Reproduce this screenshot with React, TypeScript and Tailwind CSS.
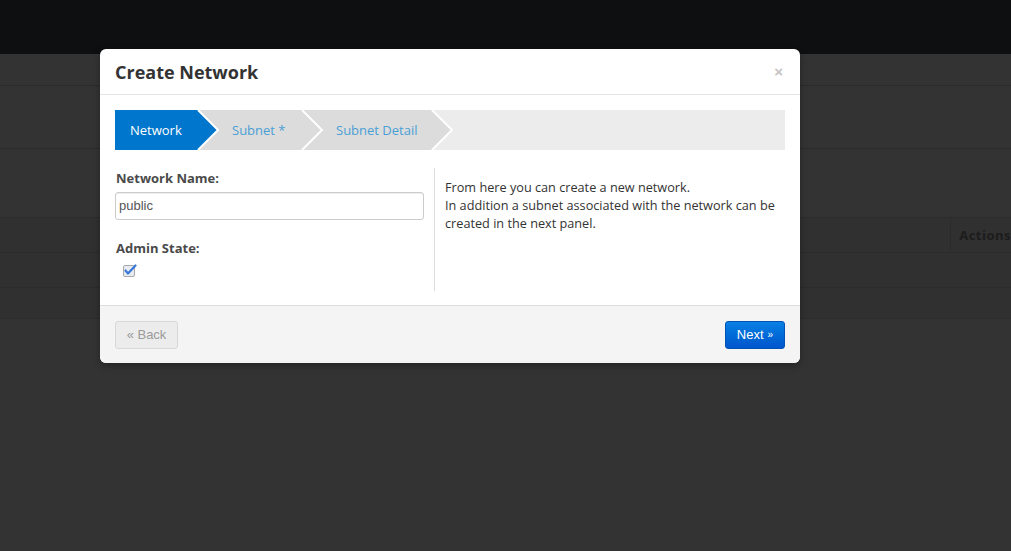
// Create Network dialog over a dimmed dashboard page

const steps = [
  { label: 'Network', width: 83, active: true },
  { label: 'Subnet *', width: 104, active: false },
  { label: 'Subnet Detail', width: 130, active: false },
]

function WizardStep({ label, width, active, z }: { label: string; width: number; active: boolean; z: number }) {
  return (
    <div className="relative h-10 shrink-0" style={{ width, zIndex: z }}>
      <svg
        className="absolute left-0 top-0"
        width={width + 22}
        height={40}
        viewBox={`0 0 ${width + 22} 40`}
      >
        <polygon
          points={`0,0 ${width},0 ${width + 20},20 ${width},40 0,40`}
          fill={active ? '#0077cc' : '#dcdcdc'}
        />
        <polyline
          points={`${width},0 ${width + 20},20 ${width},40`}
          fill="none"
          stroke="#ffffff"
          strokeWidth={2}
        />
      </svg>
      <span
        className={`relative flex h-10 items-center pt-[2px] text-[13px] ${
          active ? 'pl-[15px] text-white' : 'pl-[34px] text-[#4a9fd6]'
        }`}
      >
        {label}
      </span>
    </div>
  )
}

export default function App() {
  return (
    <div className="relative h-[551px] w-[1011px] overflow-hidden bg-[#333333] font-['Open_Sans',sans-serif]">
      {/* Page behind the overlay */}
      <div className="h-[54px] bg-[#0e0f11]" />
      <div className="h-[32px] border-b border-[#2b2b2b]" />
      <div className="h-[63px] border-b border-[#2b2b2b]" />
      <div className="h-[69px] border-b border-[#2b2b2b]" />
      <div className="flex h-[35px] border-b border-[#2b2b2b] bg-[#303030]">
        <div className="flex-1" />
        <div className="flex items-center border-l border-[#2b2b2b] pl-2 pt-[2px] text-[13px] font-bold tracking-[0.5px] text-[#1c1c1c]">
          Actions
        </div>
      </div>
      <div className="h-[35px] border-b border-[#2b2b2b] bg-[#303030]" />
      <div className="h-[31px] border-b border-[#2b2b2b] bg-[#303030]" />

      {/* Modal */}
      <div className="absolute left-[100px] top-[49px] flex h-[314px] w-[700px] flex-col rounded-[6px] bg-white shadow-[0_3px_7px_rgba(0,0,0,0.3)]">
        {/* Header */}
        <div className="flex h-[46px] shrink-0 items-center justify-between border-b border-[#e5e5e5] px-[15px] pt-[2px]">
          <h3 className="text-[18px] font-bold text-[#333333]">Create Network</h3>
          <span className="mr-[2px] font-['Liberation_Sans',sans-serif] text-[15px] font-bold text-[#c4c4c4]">×</span>
        </div>

        {/* Body */}
        <div className="flex flex-1 flex-col px-[15px] pt-[15px]">
          <div className="flex h-10 bg-[#ececec]">
            {steps.map((s, i) => (
              <WizardStep key={s.label} label={s.label} width={s.width} active={s.active} z={10 - i} />
            ))}
          </div>

          <div className="mt-[18px] flex">
            {/* Form */}
            <div className="w-[320px] shrink-0 border-r border-[#dddddd] pb-[14px]">
              <label className="block pl-[1px] pt-[1px] text-[13px] font-bold leading-[18px] text-[#4a4a4a]">
                Network Name:
              </label>
              <div className="mt-[5px] flex h-[28px] w-[309px] items-center rounded-[3px] border border-[#cccccc] pl-[3px] font-['Liberation_Sans',sans-serif] text-[13px] text-[#555555] shadow-[inset_0_1px_1px_rgba(0,0,0,0.075)]">
                public
              </div>
              <label className="mt-[19px] block pl-[1px] text-[13px] font-bold leading-[18px] text-[#4a4a4a]">
                Admin State:
              </label>
              <div className="ml-[8px] mt-[7px] h-[13px] w-[13px]">
                <svg width="14" height="13" viewBox="0 0 14 13">
                  <rect x="0.5" y="1.5" width="11" height="11" rx="1.5" fill="#e8ecf0" stroke="#a8a8a8" />
                  <path d="M2.5 6.5 L5 9.5 L12.5 1.5" fill="none" stroke="#3a78d8" strokeWidth="2.2" strokeLinecap="round" strokeLinejoin="round" />
                </svg>
              </div>
            </div>

            {/* Help text */}
            <div className="pl-[10px] pt-[10px] text-[12.7px] leading-[18px] text-[#333333]">
              <p>From here you can create a new network.</p>
              <p>In addition a subnet associated with the network can be created in the next panel.</p>
            </div>
          </div>
        </div>

        {/* Footer */}
        <div className="flex h-[58px] shrink-0 items-center justify-between rounded-b-[6px] border-t border-[#dddddd] bg-[#f4f4f4] px-[15px] font-['Liberation_Sans',sans-serif]">
          <button className="flex h-[28px] w-[63px] items-center justify-center rounded-[3px] border border-[#d8d8d8] bg-[#ececec] text-[13px] text-[#9a9a9a]">
            « Back
          </button>
          <button className="flex h-[28px] w-[60px] items-center justify-center rounded-[3px] border border-[#0052b4] bg-gradient-to-b from-[#0a80e4] to-[#0055cc] text-[13px] text-white">
            Next <span className="ml-1 text-[10px]">»</span>
          </button>
        </div>
      </div>
    </div>
  )
}
